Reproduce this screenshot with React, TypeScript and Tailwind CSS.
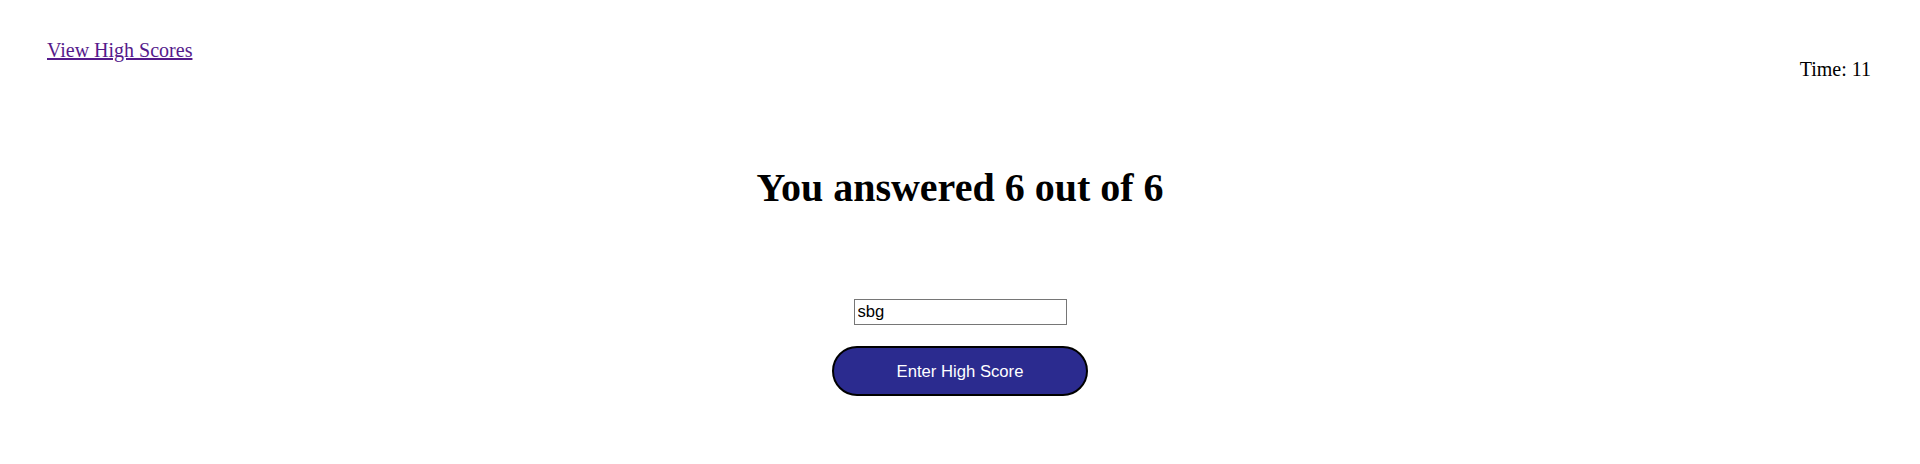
import React, { useState } from 'react';

const App = () => {
  const [initials, setInitials] = useState('sbg');

  return (
    <div className="min-h-[464px] w-full bg-white font-['Liberation_Serif',serif] text-[20px] text-black">
      <header className="flex items-start justify-between pl-[47px] pr-[49px]">
        <a
          href="#"
          className="mt-[39px] leading-[22px] text-[#551a8b] underline"
        >
          View High Scores
        </a>
        <p className="mt-[58px] leading-[22px]">Time: 11</p>
      </header>
      <main className="flex flex-col items-center">
        <h1 className="mt-[86px] text-[40px] font-bold leading-[44px]">
          You answered 6 out of 6
        </h1>
        <input
          type="text"
          value={initials}
          onChange={(e) => setInitials(e.target.value)}
          className="mt-[89px] h-[26px] w-[213px] border border-[#767676] px-[3px] font-['Liberation_Sans',Arial,sans-serif] text-[16.67px] text-black outline-none"
        />
        <button className="mt-[21px] h-[50px] w-[256px] rounded-full border-2 border-black bg-[#2b2b8f] font-['Liberation_Sans',Arial,sans-serif] text-[16.67px] text-white">
          Enter High Score
        </button>
      </main>
    </div>
  );
};

export default App;
